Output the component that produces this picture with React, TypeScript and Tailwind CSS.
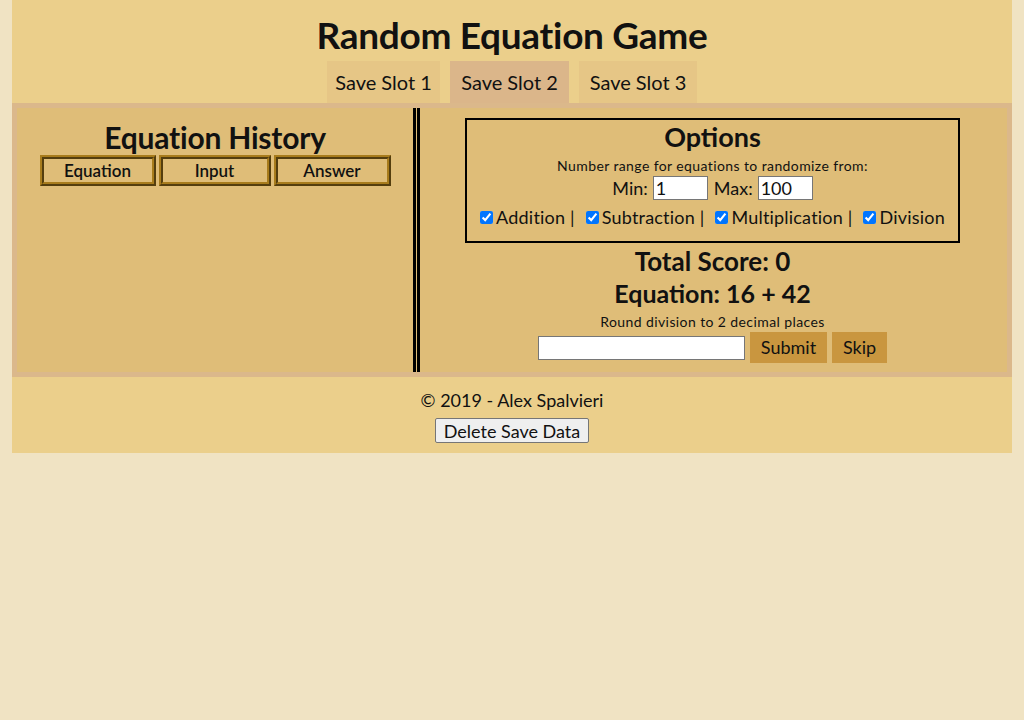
import React from "react";

const font = { fontFamily: "Lato, 'Noto Sans', sans-serif" };

export default function App() {
  return (
    <div className="min-h-[720px] w-full bg-[#f0e3c3] text-[#111]" style={font}>
      <div className="mx-3 bg-[#ebcf8b]">
        <header className="flex flex-col items-center pt-[13px]">
          <h1 className="text-[37px] font-bold leading-[44px] tracking-[-0.3px]">Random Equation Game</h1>
          <nav className="mt-[4px] flex gap-[10px]">
            <button className="h-[42px] w-[113px] bg-[#e6c686] text-[20px]">Save Slot 1</button>
            <button className="h-[42px] w-[119px] bg-[#dbb68a] text-[20px]">Save Slot 2</button>
            <button className="h-[42px] w-[118px] bg-[#e6c686] text-[20px]">Save Slot 3</button>
          </nav>
        </header>

        <main className="flex h-[274px] border-[5px] border-[#dbb88b] bg-[#dfbd78]">
          <section className="flex w-[396px] flex-col items-center pt-[11px]">
            <h2 className="text-[30px] font-bold leading-[36px] tracking-[-0.2px]">Equation History</h2>
            <div className="flex gap-[3px]">
              {[
                ["Equation", "w-[116px]"],
                ["Input", "w-[112px]"],
                ["Answer", "w-[117px]"],
              ].map(([t, w]) => (
                <div
                  key={t}
                  className={`${w} h-[31px] border-[4px] border-[#a87c1c] [border-style:ridge] text-center text-[17px] font-semibold leading-[23px]`}
                >
                  {t}
                </div>
              ))}
            </div>
          </section>

          <div className="w-[7px] border-x-[3px] border-black" />

          <section className="flex flex-1 flex-col items-center pt-[10px] pr-[2px]">
            <div className="flex w-[495px] flex-col items-center border-2 border-black pb-[13px] pt-[2px]">
              <h3 className="text-[27px] font-bold leading-[30px]">Options</h3>
              <p className="mt-[4px] text-[14px] leading-[20px] tracking-[0.4px]">Number range for equations to randomize from:</p>
              <div className="flex h-[24px] items-center gap-[5px] text-[18px]">
                <span>Min:</span>
                <input
                  defaultValue="1"
                  className="h-[24px] w-[55px] border border-[#767676] bg-white px-[2px] text-[18px]"
                  style={font}
                />
                <span className="ml-[1px]">Max:</span>
                <input
                  defaultValue="100"
                  className="h-[24px] w-[55px] border border-[#767676] bg-white px-[2px] text-[18px]"
                  style={font}
                />
              </div>
              <div className="mt-[6px] flex items-center text-[18px] leading-[22px] tracking-[0.2px]">
                <input type="checkbox" defaultChecked className="mr-[3px] h-[13px] w-[13px]" />
                <span>Addition |</span>
                <input type="checkbox" defaultChecked className="ml-[11px] mr-[3px] h-[13px] w-[13px]" />
                <span>Subtraction |</span>
                <input type="checkbox" defaultChecked className="ml-[11px] mr-[3px] h-[13px] w-[13px]" />
                <span>Multiplication |</span>
                <input type="checkbox" defaultChecked className="ml-[11px] mr-[3px] h-[13px] w-[13px]" />
                <span>Division</span>
              </div>
            </div>
            <div className="mt-[2px] text-[26px] font-bold leading-[32px]">Total Score: 0</div>
            <div className="text-[25px] font-bold leading-[32px]">Equation: 16 + 42</div>
            <p className="mt-[3px] text-[14px] leading-[20px] tracking-[0.4px]">Round division to 2 decimal places</p>
            <div className="flex items-center gap-[5px]">
              <input className="h-[24px] w-[207px] border border-[#767676] bg-white" />
              <button className="h-[31px] w-[77px] bg-[#c9963f] text-[18px]">Submit</button>
              <button className="h-[31px] w-[55px] bg-[#c9963f] text-[18px]">Skip</button>
            </div>
          </section>
        </main>

        <footer className="flex flex-col items-center pb-[10px] pt-[11px]">
          <p className="text-[18px] leading-[24px]">© 2019 - Alex Spalvieri</p>
          <button className="mt-[6px] h-[25px] rounded-[2px] border border-[#767676] bg-[#efefef] px-[8px] text-[18px] leading-[20px]">
            Delete Save Data
          </button>
        </footer>
      </div>
    </div>
  );
}
